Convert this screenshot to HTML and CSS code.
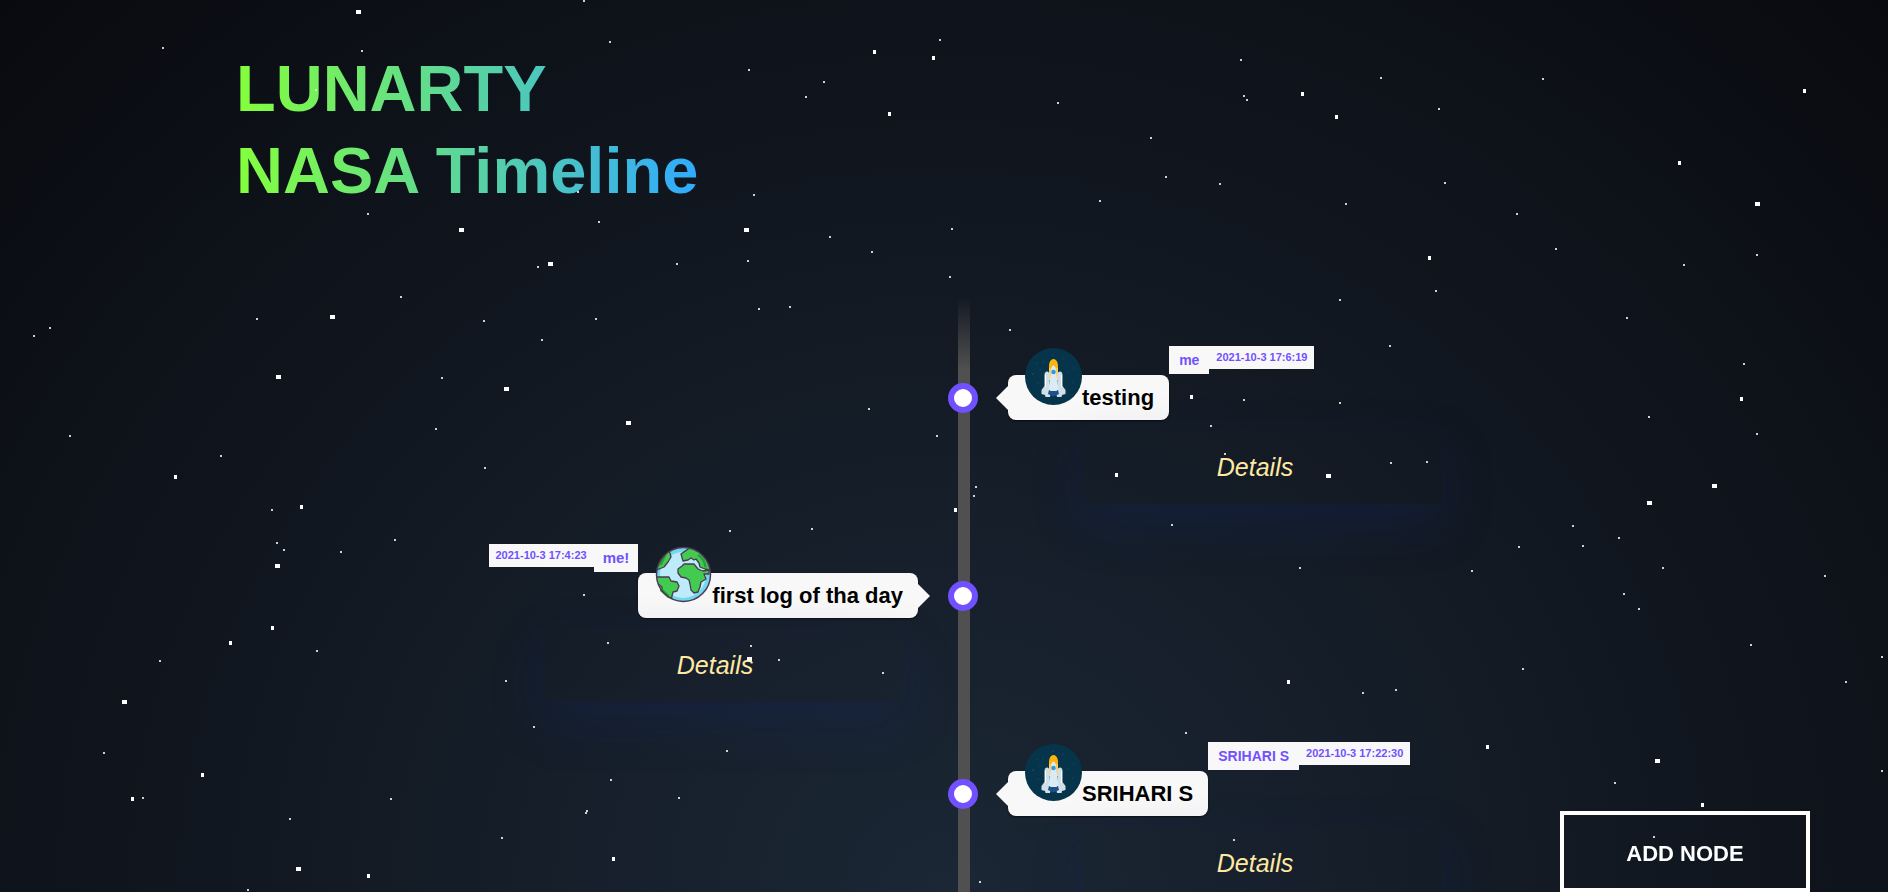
FILE: index.html
```html
<!DOCTYPE html>
<html lang="en">
<head>
<meta charset="utf-8">
<meta name="viewport" content="width=device-width, initial-scale=1">
<title>LUNARTY NASA Timeline</title>
<link rel="stylesheet" href="styles.css">
</head>
<body>
<svg class="sprite" aria-hidden="true">
  <symbol id="rocket" viewBox="0 0 57 57">
    <circle cx="28.500" cy="28.500" r="28.500" fill="#06344a"/>
    <g fill="#2b5c70"><circle cx="18" cy="14" r=".6"/><circle cx="8" cy="26" r=".7"/><circle cx="12" cy="15" r=".6"/><circle cx="38" cy="10" r=".6"/><circle cx="49" cy="20" r=".6"/><circle cx="48" cy="34" r=".6"/><circle cx="43" cy="24" r=".6"/><circle cx="15" cy="22" r=".6"/><circle cx="13" cy="35" r=".6"/><circle cx="28" cy="7" r=".6"/></g>
    <path d="M24 32V18c0-4 2-7 4.500-7s4.500 3 4.500 7v14z" fill="#ffb30f"/>
    <path d="M24 20h1.500v12H24zM31.500 20H33v12h-1.500z" fill="#ffd45c"/>
    <path d="M19.500 27c0-2 1-3.500 2.500-3.500s2.500 1.500 2.500 3.500v13l1.500 4-1 5h-4.500l-.5-2-3.500-1v-4l3-4z" fill="#cfe0ea"/>
    <path d="M37.500 27c0-2-1-3.500-2.500-3.500s-2.500 1.500-2.500 3.500v13l-1.500 4 1 5h4.500l.5-2 3.500-1v-4l-3-4z" fill="#cfe0ea"/>
    <path d="M24 42h9l1 4-5.500 2.500-5.500-2.500z" fill="#1d5288"/>
    <path d="M25.500 27c0-5 1-9.500 3-9.500s3 4.500 3 9.500l2 14-2 2h-6l-2-2z" fill="#dcebf3"/>
    <path d="M20 27h1v12h-1zM36 27h1v12h-1z" fill="#fff"/>
    <circle cx="28.500" cy="24" r="2.300" fill="#3498db"/>
  </symbol>
  <symbol id="earth" viewBox="0 0 57 57">
    <clipPath id="globe"><circle cx="28.500" cy="28.500" r="26.500"/></clipPath>
    <circle cx="28.500" cy="28.500" r="27" fill="#73d7f0"/>
    <circle cx="28" cy="29" r="23" fill="#bdebfa"/>
    <g clip-path="url(#globe)" fill="#43ca50" stroke="#4a3a50" stroke-width="1.300" stroke-linejoin="round">
      <path d="M26 8l10-7 10 4 8 10 1 9-5-1-5-2-1-4-3-4-2 1-3-2-3 2-5 1z"/>
      <path d="M0 25l3-14 9-6 3 2 1 4-3 5-4 5-5 2z"/>
      <path d="M1 31l13 0 2 4 6 1 2 4-2 5-4 1-2 8-9-5-7-11z"/>
      <path d="M23 23l4-3 2-2 10 0 4 5 5 2 6-1v4h-5l2 5-5 3-1 5-2 5-4 1-3-3-1-6-1-4-3-2-5-1-3-4z"/>
      <path d="M2 37l5 4 1 6" fill="#73d7f0"/>
    </g>
    <path d="M44 8c5 4 7 8 8 14l-3-1c0-5-3-9-7-11zM3 20l3-7 6-5-5 11zM6 41l8 8-1 3-8-7z" fill="#2d9d3c"/>
    <circle cx="28.500" cy="28.500" r="27" fill="none" stroke="#4a3a50" stroke-width="1.500"/>
  </symbol>
</svg>

<main class="page">
  <header class="title">
    <h1 class="title-text">LUNARTY<br>NASA Timeline</h1>
  </header>

  <ul class="timeline">
    <li class="entry entry-right">
      <span class="dot"></span>
      <div class="entry-head">
        <h2 class="bubble"><svg class="avatar" aria-hidden="true"><use href="#rocket"/></svg>testing</h2>
        <span class="author">me</span>
        <time class="date">2021-10-3 17:6:19</time>
      </div>
      <button class="details" type="button">Details</button>
    </li>
    <li class="entry entry-left">
      <span class="dot"></span>
      <div class="entry-head">
        <h2 class="bubble"><svg class="avatar" aria-hidden="true"><use href="#earth"/></svg>first log of tha day</h2>
        <span class="author">me!</span>
        <time class="date">2021-10-3 17:4:23</time>
      </div>
      <button class="details" type="button">Details</button>
    </li>
    <li class="entry entry-right">
      <span class="dot"></span>
      <div class="entry-head">
        <h2 class="bubble"><svg class="avatar" aria-hidden="true"><use href="#rocket"/></svg>SRIHARI S</h2>
        <span class="author">SRIHARI S</span>
        <time class="date">2021-10-3 17:22:30</time>
      </div>
      <button class="details" type="button">Details</button>
    </li>
  </ul>
</main>

<button class="add-node" type="button">ADD NODE</button>

<svg class="stars" aria-hidden="true">
  <path class="star-small" d="M583 1h2M162 48h2M361 51h2M609 42h2M315 90h2M577 192h2M367 214h2M598 222h2M537 267h2M400 297h2M256 319h2M483 321h2M595 319h2M541 340h2M33 336h2M49 328h2M441 378h2M69 436h2M435 429h2
    M939 40h2M748 70h2M823 82h2M805 97h2M1057 103h2M1240 60h2M1243 96h2M1246 100h2M1150 138h2M1165 177h2M1219 184h2M1099 201h2M753 195h2M829 237h2M951 229h2M871 252h2M676 264h2M747 261h2M949 277h2M758 309h2M789 307h2M1009 330h2M868 409h2M936 436h2M1243 400h2M1210 426h2
    M1380 78h2M1542 79h2M1438 109h2M1444 183h2M1345 204h2M1516 214h2M1555 249h2M1756 255h2M1683 265h2M1435 291h2M1339 300h2M1626 318h2M1389 346h2M1743 364h2M1339 403h2M1648 417h2M1756 434h2
    M220 456h2M484 468h2M271 510h2M276 543h2M283 550h2M340 552h2M394 540h2M583 595h2M159 661h2M316 651h2M607 643h2M505 681h2M533 727h2M103 753h2M142 798h2M390 799h2M289 819h2M610 780h2M585 813h2M586 811h2M501 838h2M247 890h2
    M1224 454h2M975 487h2M973 496h2M729 531h2M811 529h2M1171 525h2M750 646h2M778 660h2M882 673h2M726 751h2M1185 733h2M678 798h2M1233 840h2M979 882h2
    M1390 463h2M1426 462h2M1572 526h2M1618 538h2M1582 546h2M1518 547h2M1299 568h2M1471 571h2M1662 568h2M1824 576h2M1623 594h2M1638 609h2M1750 645h2M1881 657h2M1522 669h2M1845 682h2M1362 693h2M1395 690h2M1881 771h2M1614 783h2M1653 837h2"/>
  <path class="star-medium" d="M873 52h3M932 58h3M888 114h3M1190 397h3M1301 94h3M1335 117h3M1803 91h3M1678 163h3M1428 258h3M1740 399h3M174 477h3M300 507h3M271 628h3M229 643h3M201 775h3M131 799h3M367 876h3M612 859h3M1115 475h3M954 510h3M1287 682h3M1486 747h3M1701 805h3"/>
  <path class="star-large" d="M356 12h5M459 230h5M548 264h5M330 317h5M276 377h5M504 389h5M626 423h5M744 230h5M1755 204h5M275 566h5M122 702h5M296 869h5M747 659h5M1326 476h5M1712 486h5M1647 503h5M1655 761h5"/>
</svg>
</body>
</html>
```
FILE: styles.css
```css
* {
  box-sizing: border-box;
}

html {
  scrollbar-width: none;
}

body {
  margin: 0;
  min-height: 100vh;
  background: radial-gradient(ellipse at bottom, #1b2735 0%, #090a0f 100%) fixed;
  font-family: "Liberation Sans", Arial, sans-serif;
}

.sprite {
  position: absolute;
  width: 0;
  height: 0;
}

.page {
  width: 75%;
  margin: 0 auto;
  padding-top: 48px;
}

.title {
  display: flex;
}

.title-text {
  margin: 0;
  font-size: 65px;
  line-height: 82px;
  font-weight: 700;
  color: transparent;
  background: linear-gradient(to right, #84ff3c, #30aaff);
  background-clip: text;
  -webkit-background-clip: text;
}

.timeline {
  position: relative;
  display: flex;
  flex-direction: column;
  margin: 86px 0 0;
  padding: 48px 0 0 40px;
  list-style: none;
}

.timeline::before {
  content: "";
  position: absolute;
  top: 0;
  bottom: 0;
  left: calc(50% + 14px);
  width: 12px;
  background: linear-gradient(to bottom, transparent, #505050 72px);
}

.entry {
  position: relative;
  width: 50%;
  min-height: 198px;
  display: flex;
  flex-direction: column;
}

.entry-right {
  align-self: flex-end;
  align-items: flex-start;
  padding-left: 44px;
}

.entry-left {
  align-self: flex-start;
  align-items: flex-end;
  padding-right: 46px;
}

.dot {
  position: absolute;
  top: 37px;
  width: 30px;
  height: 30px;
  border: 6px solid #7151ff;
  border-radius: 50%;
  background: #fff;
}

.entry-right .dot {
  left: -16px;
}

.entry-left .dot {
  right: -14px;
}

.entry-head {
  display: flex;
  align-items: flex-start;
  white-space: nowrap;
}

.entry-left .entry-head {
  flex-direction: row-reverse;
}

.bubble {
  position: relative;
  margin: 29px 0 0;
  padding: 0 15px 0 74px;
  border-radius: 8px;
  background: #f8f8f8;
  box-shadow: 0 1px 2px rgba(0, 0, 0, 0.6);
  font-size: 22px;
  line-height: 45px;
  font-weight: 700;
  color: #000;
}

.bubble::before {
  content: "";
  position: absolute;
  top: 11px;
  border: 12px solid transparent;
}

.entry-right .bubble::before {
  right: 100%;
  border-left-width: 0;
  border-right-color: #f8f8f8;
}

.entry-left .bubble::before {
  left: 100%;
  border-right-width: 0;
  border-left-color: #f8f8f8;
}

.avatar {
  position: absolute;
  top: -27px;
  left: 17px;
  width: 57px;
  height: 57px;
}

.author,
.date {
  background: #f8f8f8;
  color: #7151ff;
  font-weight: 700;
}

.author {
  padding: 0 9px;
  font-size: 15px;
  line-height: 28px;
}

.entry-right .author {
  font-size: 14px;
  padding: 0 10px;
}

.date {
  padding: 0 7px;
  font-size: 11px;
  line-height: 23px;
}

.details {
  position: relative;
  width: 360px;
  height: 74px;
  margin: 10px 15px 0 75px;
  padding: 0 16px 0 0;
  border: 0;
  border-radius: 8px;
  background: transparent;
  box-shadow: 0 20px 50px rgba(20, 40, 110, 0.25);
  font: italic 25px "Liberation Sans", Arial, sans-serif;
  color: #ffe9a3;
}

.add-node {
  position: fixed;
  right: 78px;
  bottom: 0;
  width: 250px;
  height: 81px;
  padding: 4px 0 0;
  border: 4px solid #fff;
  background: transparent;
  font: 700 22px "Liberation Sans", Arial, sans-serif;
  color: #fff;
}

.stars {
  position: absolute;
  top: 0;
  left: 0;
  width: 100%;
  height: 100vh;
  pointer-events: none;
}

.stars path {
  fill: none;
  stroke: #fff;
}

.star-small {
  stroke-width: 2px;
  opacity: 0.8;
}

.star-medium {
  stroke-width: 4px;
}

.star-large {
  stroke-width: 4px;
}
```
